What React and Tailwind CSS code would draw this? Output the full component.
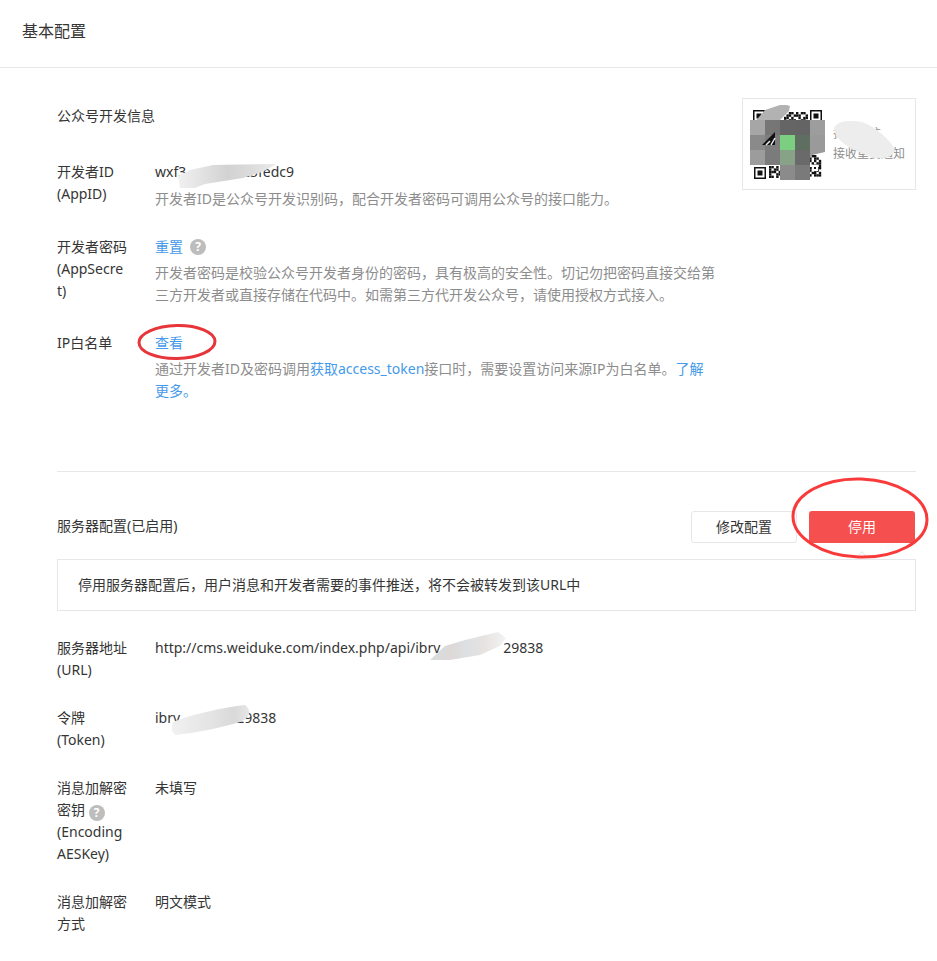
import React from 'react';

function Help() {
  return (
    <span className="inline-flex items-center justify-center w-4 h-4 rounded-full bg-[#bdbdbd] text-white text-[12px] leading-none font-bold align-[-2px]">?</span>
  );
}

function Row({ label, children }) {
  return (
    <div className="flex mb-[26px]">
      <div className="w-[72px] mr-[26px] break-all shrink-0">{label}</div>
      <div className="flex-1 min-w-0">{children}</div>
    </div>
  );
}

function Modules({ x, y, rows, size = 2.4 }) {
  return rows.flatMap((row, r) =>
    [...row].map((c, i) =>
      c === '1' ? <rect key={`${x}-${y}-${r}-${i}`} x={x + i * size} y={y + r * size} width={size} height={size} fill="#111" /> : null
    )
  );
}

function QrPicture() {
  const mosaic = [
    [750, 120, '#a6a6a6'], [765, 120, '#767676'], [780, 120, '#656565'], [795, 120, '#646464'], [810, 120, '#9d9d9d'],
    [750, 135, '#8a8a8a'], [765, 135, '#7e7e7e'], [780, 135, '#7ccf80'], [795, 135, '#5e6e60'], [810, 135, '#9a9a9a'],
    [750, 150, '#9c9c9c'], [765, 150, '#7b7b7b'], [780, 150, '#88a288'], [795, 150, '#6a6a6a'],
    [780, 165, '#8b8b8b'], [795, 165, '#7a7a7a'],
  ];
  const finders = [[753, 110], [810, 110], [754, 167]];
  return (
    <svg width="78" height="78" viewBox="750 105 78 78" className="shrink-0">
      {finders.map(([x, y]) => (
        <g key={`${x}-${y}`}>
          <rect x={x + 0.75} y={y + 0.75} width="10.5" height="10.5" fill="none" stroke="#111" strokeWidth="1.5" />
          <rect x={x + 3.5} y={y + 3.5} width="5" height="5" fill="#111" />
        </g>
      ))}
      <Modules x={784} y={112} rows={['0011010110', '0110111001', '1101001011', '1011100110']} />
      <Modules x={769} y={166} rows={['110101', '101101', '111011', '100110', '110101']} />
      <Modules x={802} y={155} rows={['01101100', '11010110', '00110101', '01101011', '11000101', '01011011', '11010110', '01101101', '10110111']} />
      <rect x="812" y="165" width="6" height="6" fill="#fff" />
      <rect x="814" y="167" width="2" height="2" fill="#111" />
      <path d="M752 125L765 110L783 104L790 106L789 111L780 120H752Z" fill="#b2b2b2" />
      {mosaic.map(([x, y, fill]) => (
        <rect key={`${x}-${y}`} x={x} y={y} width="15" height="15" fill={fill} />
      ))}
      <path d="M762 145L775 132V145Z" fill="#111" />
      <path d="M766 145L770 141M771 145L775 138" stroke="#eee" strokeWidth="1.5" />
      <path d="M810 150H825V152L812 155L810 158Z" fill="#9a9a9a" />
    </svg>
  );
}

export default function App() {
  return (
    <div className="relative w-[937px] min-h-[961px] bg-white text-[14px] leading-[22px] text-[#353535] font-['Noto_Sans','Noto_Sans_CJK_SC',sans-serif] overflow-hidden">
      <div className="h-[68px] border-b border-[#e7e7eb] pl-[22px] pt-[19px] text-[16px] leading-6">基本配置</div>

      <div className="pr-[21px] pl-[57px]">
        {/* 公众号开发信息 */}
        <div className="flex justify-between pt-[30px] h-[93px]">
          <div className="pt-[7px] h-[22px]">公众号开发信息</div>
          <div className="flex items-center w-[174px] h-[92px] border border-[#e7e7eb] pl-[7px] gap-[5px]">
            <QrPicture />
            <div className="text-[12px] leading-[20px] text-[#8d8d8d] whitespace-nowrap">
              <div>扫码关注</div>
              <div>接收重要通知</div>
            </div>
          </div>
        </div>

        <Row label={<>开发者ID<br />(AppID)</>}>
          <div className="flex"><span>wxf3</span><span className="w-[57px]" /><span>c5fedc9</span></div>
          <p className="mt-[5px] w-[560px] text-[#8d8d8d]">开发者ID是公众号开发识别码，配合开发者密码可调用公众号的接口能力。</p>
        </Row>
        <Row label="开发者密码 (AppSecret)">
          <div className="flex items-center gap-[7px]">
            <a className="text-[#459ae9]">重置</a>
            <Help />
          </div>
          <p className="mt-[4px] w-[560px] text-[#8d8d8d]">开发者密码是校验公众号开发者身份的密码，具有极高的安全性。切记勿把密码直接交给第三方开发者或直接存储在代码中。如需第三方代开发公众号，请使用授权方式接入。</p>
        </Row>
        <Row label="IP白名单">
          <a className="block text-[#459ae9]">查看</a>
          <p className="mt-[4px] w-[560px] text-[#8d8d8d]">
            通过开发者ID及密码调用<a className="text-[#459ae9]">获取access_token</a>接口时，需要设置访问来源IP为白名单。<a className="text-[#459ae9]">了解更多。</a>
          </p>
        </Row>

        <div className="border-t border-[#e7e7eb] mt-[69px]" />

        {/* 服务器配置 */}
        <div className="flex items-center justify-between pt-[39px] pb-[16px]">
          <div className="mb-[2px]">服务器配置(已启用)</div>
          <div className="flex gap-3 pr-px">
            <button className="w-[106px] h-[32px] rounded-[3px] border border-[#e7e7eb] bg-white text-[#353535]">修改配置</button>
            <button className="w-[106px] h-[32px] rounded-[3px] bg-[#f5504f] text-white">停用</button>
          </div>
        </div>

        <div className="relative border border-[#e7e7eb] h-[52px] pl-5 flex items-center mb-[26px]">
          停用服务器配置后，用户消息和开发者需要的事件推送，将不会被转发到该URL中
          <span className="absolute -top-[7px] left-[800px] w-2 h-2 rotate-45 border-l border-t border-[#e7e7eb]" />
        </div>

        <Row label={<>服务器地址<br />(URL)</>}>
          <div className="flex"><span>http://cms.weiduke.com/index.php/api/ibrv</span><span className="w-[63px]" /><span>29838</span></div>
        </Row>
        <Row label={<>令牌<br />(Token)</>}>
          <div className="flex"><span>ibrv</span><span className="w-[56px]" /><span>29838</span></div>
        </Row>
        <Row label={<>消息加解密<br />密钥 <Help /><br />(Encoding<br />AESKey)</>}>未填写</Row>
        <Row label="消息加解密方式">明文模式</Row>
      </div>

      {/* 截图上的手工标注和涂抹 */}
      <svg className="absolute inset-0 pointer-events-none" width="937" height="961" viewBox="0 0 937 961">
        <defs>
          <linearGradient id="smear" x1="0" x2="1" y1="0" y2="0">
            <stop offset="0" stopColor="#f1f1f1" />
            <stop offset="0.25" stopColor="#e2e2e2" />
            <stop offset="0.5" stopColor="#d2d2d2" />
            <stop offset="0.75" stopColor="#dcdcdc" />
            <stop offset="1" stopColor="#ececec" />
          </linearGradient>
          <linearGradient id="smearUrl" x1="0" x2="1" y1="0" y2="0">
            <stop offset="0" stopColor="#d8dcde" />
            <stop offset="0.3" stopColor="#ddd9d7" />
            <stop offset="0.5" stopColor="#dde1e4" />
            <stop offset="0.7" stopColor="#e6e2e0" />
            <stop offset="1" stopColor="#f3f3f3" />
          </linearGradient>
          <linearGradient id="smearToken" x1="0" x2="1" y1="0" y2="0">
            <stop offset="0" stopColor="#f1f1f1" />
            <stop offset="0.5" stopColor="#e4e4e4" />
            <stop offset="0.8" stopColor="#d9d9d9" />
            <stop offset="1" stopColor="#e6e6e6" />
          </linearGradient>
        </defs>
        <path d="M178 176L190 170L213 165L277 164L262 172L243 178L205 184L195 188L180 188Z" fill="url(#smear)" />
        <path d="M430 660L445 646L465 640L498 632L506 638L500 646L480 655L450 660Z" fill="url(#smearUrl)" />
        <path d="M173 722C190 715 220 708 245 705C252 710 250 718 240 722C220 728 195 733 176 735C171 733 171 727 173 722Z" fill="url(#smearToken)" />
        <path d="M834 128C838 120 850 120 862 122C878 128 892 142 895 150C893 158 880 160 870 157C855 150 835 143 834 128Z" fill="#ededed" />
        <ellipse cx="177" cy="342" rx="38" ry="16.5" fill="none" stroke="#e8353a" strokeWidth="3" transform="rotate(-1 177 342)" />
        <ellipse cx="860" cy="518" rx="67" ry="39" fill="none" stroke="#f93a3a" strokeWidth="3" transform="rotate(2 860 518)" />
      </svg>
    </div>
  );
}
